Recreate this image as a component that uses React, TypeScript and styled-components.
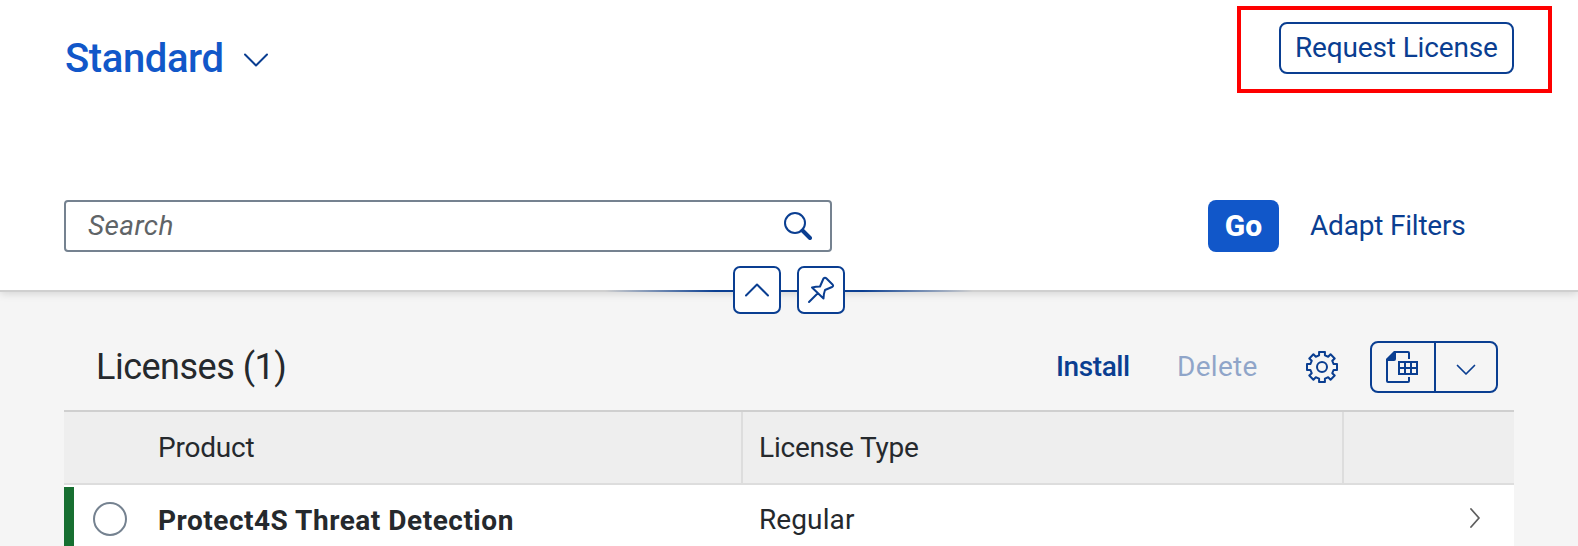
import React from "react";
import styled, { createGlobalStyle } from "styled-components";

const blue = "#0a3e91";

const Global = createGlobalStyle`
  * { box-sizing: border-box; }
  body { margin: 0; background: #f5f5f5; font-family: Roboto, "Liberation Sans", sans-serif; }
  button { font: inherit; cursor: pointer; }
  svg { display: block; flex: none; }
`;

const Page = styled.div`
  height: 546px;
  overflow: hidden;
  color: #25292d;
  font-size: 28px;
`;

const Header = styled.header`
  position: relative;
  height: 292px;
  background: #fff;
  border-bottom: 2px solid #cfcfcf;
  box-shadow: 0 2px 8px rgba(0, 0, 0, 0.13);
`;

const TitleBar = styled.div`
  height: 200px;
  padding: 6px 26px 0 64px;
  display: flex;
  justify-content: space-between;
  align-items: flex-start;
`;

const Text = styled.span<{ $spacing?: number; $weight?: number }>`
  white-space: nowrap;
  letter-spacing: ${(p) => p.$spacing ?? 0}px;
  font-weight: ${(p) => p.$weight ?? 400};
`;

const Variant = styled.div`
  display: flex;
  align-items: center;
  height: 105px;
  color: #1157c9;
  font-size: 40px;
`;

const VariantName = styled.div`
  width: 180px;
  padding-left: 1px;
`;

const VariantArrow = styled.div`
  padding-top: 2px;
`;

const Highlight = styled.div`
  width: 315px;
  height: 87px;
  border: 4px solid #fe0000;
  padding: 12px 0 0 38px;
`;

const OutlineButton = styled.button`
  width: 235px;
  height: 52px;
  padding: 0 0 2px 14px;
  border: 2px solid ${blue};
  border-radius: 8px;
  background: #fff;
  color: ${blue};
  text-align: left;
`;

const FilterBar = styled.div`
  display: flex;
  align-items: center;
  padding: 0 64px;
  height: 52px;
`;

const SearchField = styled.div`
  width: 768px;
  height: 52px;
  border: 2px solid #758290;
  border-radius: 4px;
  padding: 0 18px 0 22px;
  display: flex;
  align-items: center;
  justify-content: space-between;
  color: #5f6467;
  font-style: italic;
`;

const Placeholder = styled.div`
  padding-bottom: 2px;
`;

const GoButton = styled.button`
  width: 71px;
  height: 52px;
  margin-left: 376px;
  padding: 0 0 2px;
  border: 0;
  border-radius: 8px;
  background: #1157c9;
  color: #fff;
  font-size: 30px;
`;

const LinkButton = styled.button<{ $width: number; $gap: number; $dim?: boolean }>`
  width: ${(p) => p.$width}px;
  margin-left: ${(p) => p.$gap}px;
  padding: 0 0 2px;
  border: 0;
  background: none;
  color: ${blue};
  opacity: ${(p) => (p.$dim ? 0.43 : 1)};
  text-align: left;
`;

const HeaderToggle = styled.div`
  position: absolute;
  left: 605px;
  top: 266px;
  width: 368px;
  height: 48px;
  display: flex;
  justify-content: center;
  gap: 16px;
  background: linear-gradient(90deg, transparent, ${blue} 30%, ${blue} 70%, transparent) 0 24px / 100% 2px no-repeat;
`;

const SquareButton = styled.button`
  width: 48px;
  height: 48px;
  padding: 0;
  border: 2px solid ${blue};
  border-radius: 7px;
  background: #fff;
  display: grid;
  place-items: center;
`;

const Content = styled.main`
  width: 1450px;
  margin-left: 64px;
`;

const Toolbar = styled.div`
  display: flex;
  align-items: center;
  height: 118px;
  padding: 32px 16px 0 32px;
`;

const Heading = styled.h2`
  margin: 0;
  width: 961px;
  font-size: 36px;
  font-weight: 400;
`;

const IconButton = styled.button`
  margin: 0 0 0 48px;
  padding: 0;
  border: 0;
  background: none;
`;

const SplitButton = styled.div`
  display: flex;
  width: 128px;
  height: 52px;
  margin-left: 32px;
  border: 2px solid ${blue};
  border-radius: 8px;
`;

const SplitPart = styled.button<{ $first?: boolean }>`
  flex: ${(p) => (p.$first ? "0 0 64px" : "1")};
  padding: ${(p) => (p.$first ? "0 2px 0 0" : "5px 0 0")};
  border: 0;
  border-right: ${(p) => (p.$first ? `2px solid ${blue}` : "0")};
  background: none;
  display: grid;
  place-items: center;
`;

const Row = styled.div<{ $head?: boolean }>`
  display: grid;
  grid-template-columns: 93px 586px 601px 170px;
  height: ${(p) => (p.$head ? 75 : 66)}px;
  background: ${(p) => (p.$head ? "#eeeeee" : "#fff")};
  border-top: ${(p) => (p.$head ? "2px solid #cfcfcf" : "0")};
  border-bottom: ${(p) => (p.$head ? "2px solid #dddddd" : "0")};
`;

const Cell = styled.div<{ $line?: boolean; $pad?: number; $drop?: number }>`
  display: flex;
  align-items: center;
  padding-left: ${(p) => p.$pad ?? 0}px;
  padding-top: ${(p) => p.$drop ?? 0}px;
  border-right: ${(p) => (p.$line ? "2px solid #dddddd" : "0")};
`;

const SelectCell = styled.div`
  margin-top: 2px;
  border-left: 10px solid #176f31;
  padding: 15px 0 0 19px;
`;

const Radio = styled.div`
  width: 34px;
  height: 34px;
  border: 2px solid #758290;
  border-radius: 50%;
`;

const Chevron = ({ w, h, d, color = blue, stroke = 2 }: { w: number; h: number; d: string; color?: string; stroke?: number }) => (
  <svg width={w} height={h} fill="none" stroke={color} strokeWidth={stroke} strokeLinecap="round" strokeLinejoin="round">
    <path d={d} />
  </svg>
);

const SearchIcon = () => (
  <svg width="28" height="28" fill="none" stroke={blue}>
    <circle cx="11" cy="11" r="10" strokeWidth="2" />
    <path d="M18.5 18.5 26 26" strokeWidth="4" strokeLinecap="round" />
  </svg>
);

const PinIcon = () => (
  <svg width="28" height="28" fill="none" stroke={blue} strokeWidth="2" strokeLinejoin="round" strokeLinecap="round">
    <path d="M2 26 10.5 17.5M16.5 2.5Q18 1 19.5 2.5L25.5 8.5Q27 10 25 11L18 14Q16.500 18 16.500 22.500L5 11.500Q9 10.500 13 10.500Z" />
  </svg>
);

const teeth = Array.from({ length: 8 }, (_, i) => {
  const point = (r: number, deg: number) => {
    const a = ((i * 45 + deg - 90) * Math.PI) / 180;
    return `${(16 + r * Math.cos(a)).toFixed(2)} ${(16 + r * Math.sin(a)).toFixed(2)}`;
  };
  return `${point(12, -14)} L${point(15.3, -11)} L${point(15.3, 11)} L${point(12, 14)}`;
});

const GearIcon = () => (
  <svg width="32" height="32" fill="none" stroke={blue} strokeWidth="2" strokeLinejoin="round">
    <path d={`M${teeth.join(" L")} Z`} />
    <circle cx="16" cy="16" r="5" />
  </svg>
);

const ExportIcon = () => (
  <svg width="32" height="32" fill="none" stroke={blue} strokeWidth="2">
    <path d="M23 8V2Q23 1 22 1H9L1 9V30Q1 31 2 31H22Q23 31 23 30V26" />
    <path d="M0 10V8L8 0H10V8Q10 10 8 10Z" fill={blue} stroke="none" />
    <path d="M13 11H31V23H13ZM13 17H31M19 11V23M25 11V23" />
  </svg>
);

export default function App() {
  return (
    <Page>
      <Global />
      <Header>
        <TitleBar>
          <Variant>
            <VariantName><Text $weight={500} $spacing={-0.4}>Standard</Text></VariantName>
            <VariantArrow><Chevron w={24} h={14} d="M1 1.500 12 12.500 23 1.500" /></VariantArrow>
          </Variant>
          <Highlight>
            <OutlineButton><Text $spacing={-0.15}>Request License</Text></OutlineButton>
          </Highlight>
        </TitleBar>
        <FilterBar>
          <SearchField>
            <Placeholder><Text $spacing={0.4}>Search</Text></Placeholder>
            <SearchIcon />
          </SearchField>
          <GoButton><Text $weight={800}>Go</Text></GoButton>
          <LinkButton $width={155} $gap={31}><Text $spacing={-0.2}>Adapt Filters</Text></LinkButton>
        </FilterBar>
        <HeaderToggle>
          <SquareButton aria-label="Collapse header"><Chevron w={24} h={14} d="M1 12.500 12 1.500 23 12.500" /></SquareButton>
          <SquareButton aria-label="Pin header"><PinIcon /></SquareButton>
        </HeaderToggle>
      </Header>
      <Content>
        <Toolbar>
          <Heading><Text $spacing={-0.5}>Licenses (1)</Text></Heading>
          <LinkButton $width={73} $gap={-1}><Text $weight={500} $spacing={-0.4}>Install</Text></LinkButton>
          <LinkButton $width={81} $gap={48} $dim><Text $spacing={0.3}>Delete</Text></LinkButton>
          <IconButton aria-label="Settings"><GearIcon /></IconButton>
          <SplitButton>
            <SplitPart $first aria-label="Export"><ExportIcon /></SplitPart>
            <SplitPart aria-label="Export options"><Chevron w={20} h={12} d="M1.500 1.500 10 10 18.500 1.500" stroke={1.7} /></SplitPart>
          </SplitButton>
        </Toolbar>
        <Row $head>
          <Cell />
          <Cell $line $pad={1}><Text $spacing={-0.2}>Product</Text></Cell>
          <Cell $line $pad={16}><Text $spacing={-0.2}>License Type</Text></Cell>
          <Cell />
        </Row>
        <Row>
          <SelectCell><Radio /></SelectCell>
          <Cell $pad={1} $drop={4}><Text $weight={700} $spacing={0.52}>Protect4S Threat Detection</Text></Cell>
          <Cell $pad={16} $drop={2}><Text $spacing={0.1}>Regular</Text></Cell>
          <Cell $pad={126}><Chevron w={10} h={20} d="M1 1 9 10 1 19" color="#5e5e5e" stroke={1.8} /></Cell>
        </Row>
      </Content>
    </Page>
  );
}
